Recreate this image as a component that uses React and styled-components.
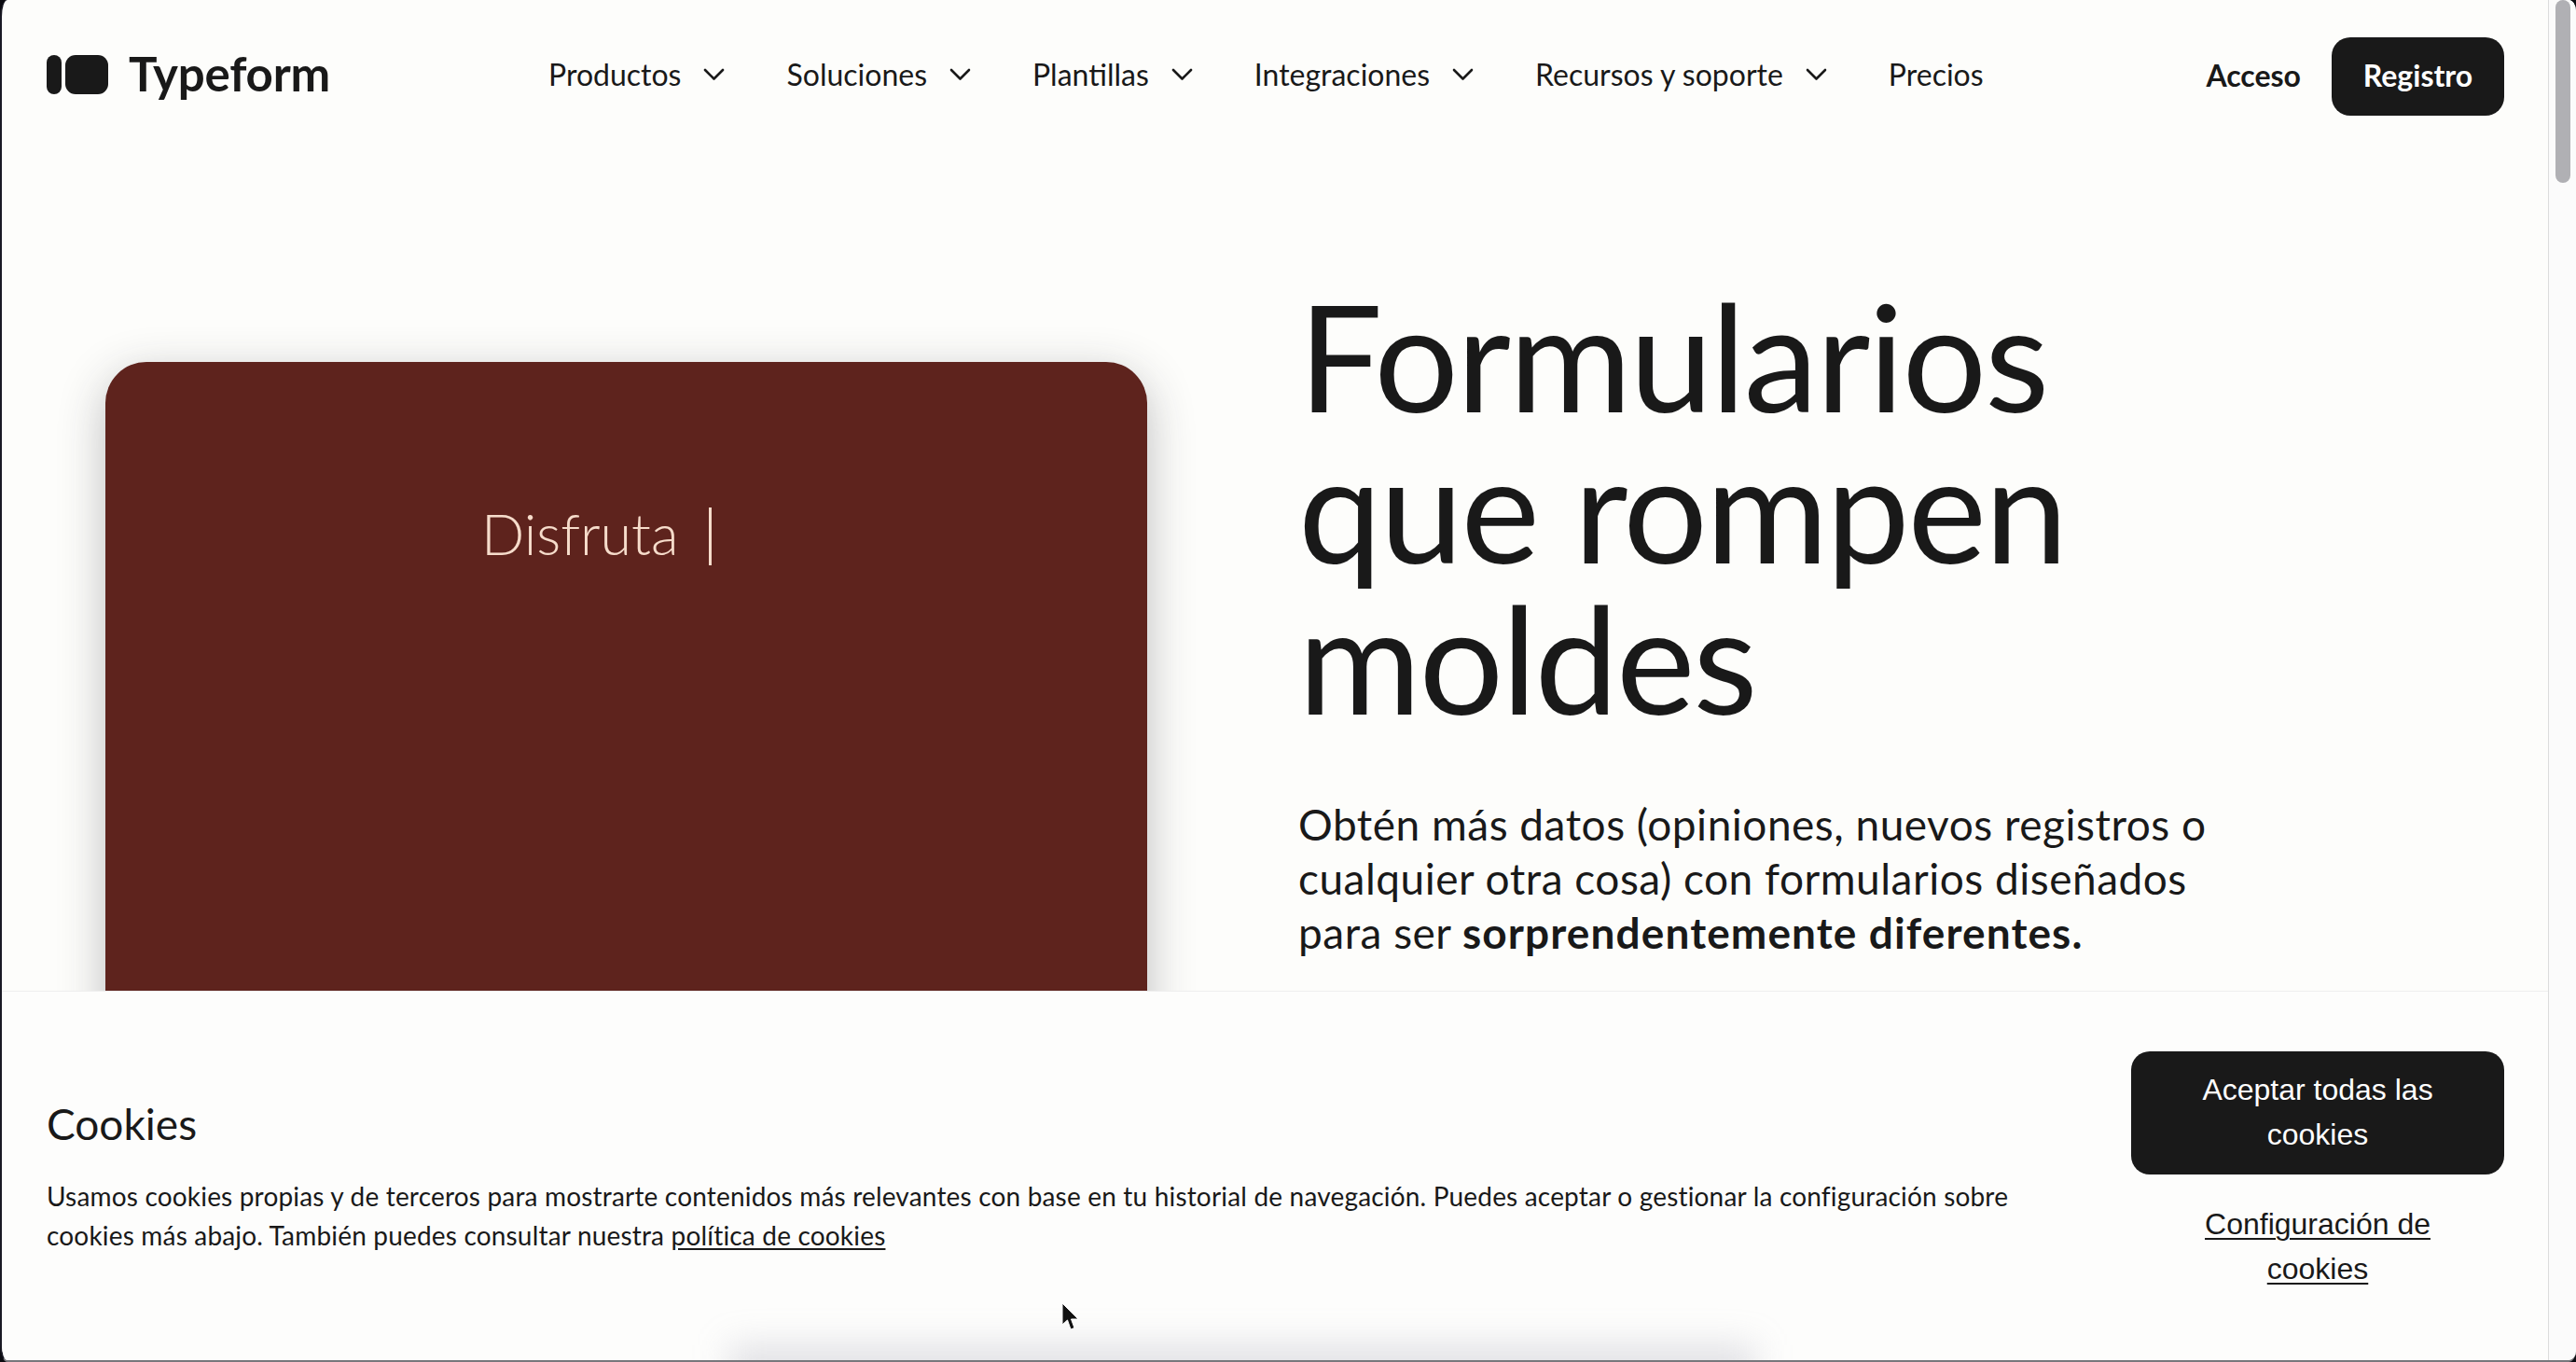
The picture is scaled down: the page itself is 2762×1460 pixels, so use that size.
import React from "react";
import styled, { createGlobalStyle } from "styled-components";

const Global = createGlobalStyle`
  html, body { margin: 0; padding: 0; background: #0b0b10; }
  * { box-sizing: border-box; }
  a { color: inherit; }
`;

const Frame = styled.div`
  position: relative;
  width: 2762px;
  height: 1460px;
  overflow: hidden;
  display: flex;
  background: #fdfdfb;
  border-left: 2px solid #1a1a24;
  border-bottom: 2px solid #77777c;
  border-radius: 8px 8px 8px 8px / 18px 12px 12px 18px;
  color: #191919;
  font-family: Lato, "Noto Sans", sans-serif;
`;

const Page = styled.div`
  flex: 1;
  min-width: 0;
  display: flex;
  flex-direction: column;
`;

const Header = styled.header`
  height: 160px;
  flex: none;
  display: flex;
  align-items: center;
  padding: 0 47px 0 48px;
`;

const Brand = styled.a`
  display: flex;
  align-items: center;
  gap: 22px;
  width: 538px;
  font-size: 51px;
  font-weight: 700;
  letter-spacing: -0.2px;
  line-height: 1;
`;

const BrandName = styled.span`
  margin-top: -4px;
`;

const Nav = styled.nav`
  display: flex;
  align-items: center;
  gap: 66px;
  flex: 1;
`;

const NavItem = styled.a`
  display: flex;
  align-items: center;
  gap: 24px;
  font-size: 32px;
  line-height: 1;
`;

const Actions = styled.div`
  display: flex;
  align-items: center;
  gap: 33px;
`;

const Login = styled.a`
  font-size: 32px;
  font-weight: 700;
`;

const SignUp = styled.a`
  display: flex;
  align-items: center;
  justify-content: center;
  width: 185px;
  height: 84px;
  margin-top: 4px;
  padding-bottom: 4px;
  border-radius: 20px;
  background: #191919;
  color: #fff;
  font-size: 32px;
  font-weight: 700;
`;

const Hero = styled.main`
  flex: 1;
  display: flex;
  align-items: flex-start;
  padding: 0 0 0 111px;
  gap: 162px;
`;

const Card = styled.div`
  flex: none;
  width: 1117px;
  height: 1000px;
  margin-top: 228px;
  border-radius: 44px;
  background: #5e231d;
  box-shadow: 0 14px 50px rgba(40, 40, 50, 0.3);
  display: flex;
  align-items: flex-start;
  padding: 146px 0 0 403px;
  gap: 33px;
  color: #f6dccb;
`;

const TypedWord = styled.span`
  font-size: 61px;
  font-weight: 300;
  line-height: 75px;
`;

const Caret = styled.span`
  width: 3px;
  height: 62px;
  margin-top: 10px;
  background: #f6dccb;
`;

const Copy = styled.div`
  width: 1200px;
  padding-top: 139px;
`;

const Title = styled.h1`
  margin: 0;
  font-size: 160px;
  font-weight: 400;
  line-height: 162px;
  letter-spacing: -2.2px;
  width: 900px;
`;

const Lead = styled.p`
  margin: 70px 0 0;
  font-size: 46px;
  line-height: 58px;
  letter-spacing: 0.5px;
  width: 1000px;
`;

const LeadStrong = styled.b`
  font-weight: 700;
  letter-spacing: 1.1px;
`;

const Scrollbar = styled.aside`
  flex: none;
  width: 30px;
  border-left: 1px solid #dcdcdc;
  background: #fbfbfb;
  padding: 0 6px 0 7px;
`;

const Thumb = styled.div`
  height: 196px;
  border-radius: 8px;
  background: #b0b0b4;
`;

const Banner = styled.section`
  position: absolute;
  left: 0;
  right: 30px;
  top: 1062px;
  bottom: 0;
  overflow: hidden;
  display: flex;
  justify-content: space-between;
  padding: 64px 47px 0 48px;
  background: #fdfdfc;
  border-top: 1px solid #eeeeee;
  &::after {
    content: "";
    position: absolute;
    left: 780px;
    width: 1100px;
    bottom: -28px;
    height: 44px;
    background: rgba(150, 150, 170, 0.28);
    filter: blur(18px);
  }
`;

const BannerText = styled.div`
  width: 2120px;
  padding-top: 50px;
`;

const BannerTitle = styled.h2`
  margin: 0;
  font-size: 46px;
  font-weight: 400;
  line-height: 56px;
`;

const BannerBody = styled.p`
  margin: 28px 0 0;
  font-size: 28px;
  line-height: 42px;
  letter-spacing: 0.18px;
`;

const PolicyLink = styled.a`
  text-underline-offset: 3px;
`;

const BannerActions = styled.div`
  flex: none;
  width: 400px;
  display: flex;
  flex-direction: column;
  gap: 29px;
  font-family: "Liberation Sans", Arial, sans-serif;
  font-size: 32px;
  line-height: 48px;
  text-align: center;
`;

const Accept = styled.button`
  height: 132px;
  border: 0;
  border-radius: 20px;
  background: #191919;
  color: #fff;
  font: inherit;
  padding: 0 60px 2px;
`;

const Configure = styled.a`
  padding: 0 60px;
  text-decoration: underline;
  text-decoration-thickness: 2px;
  text-underline-offset: 4px;
`;

const Pointer = styled.svg`
  position: absolute;
  left: 1135px;
  top: 1396px;
`;

const Logo = () => (
  <svg width="66" height="42" viewBox="0 0 66 42" aria-hidden="true">
    <rect x="0" y="0" width="16" height="42" rx="8" fill="#191919" />
    <rect x="20" y="0" width="46" height="42" rx="11" fill="#191919" />
  </svg>
);

const Chevron = () => (
  <svg width="23" height="14" viewBox="0 0 23 14" aria-hidden="true">
    <path d="M2 2 L11.5 11.5 L21 2" fill="none" stroke="#191919" strokeWidth="2.6" strokeLinecap="round" strokeLinejoin="round" />
  </svg>
);

const items = [
  ["Productos", true],
  ["Soluciones", true],
  ["Plantillas", true],
  ["Integraciones", true],
  ["Recursos y soporte", true],
  ["Precios", false],
];

export default function App() {
  return (
    <Frame>
      <Global />
      <Page>
        <Header>
          <Brand>
            <Logo />
            <BrandName>Typeform</BrandName>
          </Brand>
          <Nav>
            {items.map(([label, hasMenu]) => (
              <NavItem key={label}>
                {label}
                {hasMenu && <Chevron />}
              </NavItem>
            ))}
          </Nav>
          <Actions>
            <Login>Acceso</Login>
            <SignUp>Registro</SignUp>
          </Actions>
        </Header>
        <Hero>
          <Card>
            <TypedWord>Disfruta</TypedWord>
            <Caret />
          </Card>
          <Copy>
            <Title>Formularios que rompen moldes</Title>
            <Lead>
              Obtén más datos (opiniones, nuevos registros o cualquier otra cosa) con formularios diseñados para ser <LeadStrong>sorprendentemente diferentes.</LeadStrong>
            </Lead>
          </Copy>
        </Hero>
      </Page>
      <Scrollbar>
        <Thumb />
      </Scrollbar>
      <Banner>
        <BannerText>
          <BannerTitle>Cookies</BannerTitle>
          <BannerBody>
            Usamos cookies propias y de terceros para mostrarte contenidos más relevantes con base en tu historial de navegación. Puedes aceptar o gestionar la configuración sobre cookies más abajo. También puedes consultar nuestra <PolicyLink href="#p">política de cookies</PolicyLink>
          </BannerBody>
        </BannerText>
        <BannerActions>
          <Accept>Aceptar todas las cookies</Accept>
          <Configure href="#c">Configuración de cookies</Configure>
        </BannerActions>
      </Banner>
      <Pointer width="22" height="34" viewBox="0 0 22 34" aria-hidden="true">
        <path d="M2 1 L2 24 L7.5 19 L11 29 L15 27.5 L11.5 18 L19 18 Z" fill="#111" stroke="#fff" strokeWidth="1" />
      </Pointer>
    </Frame>
  );
}
